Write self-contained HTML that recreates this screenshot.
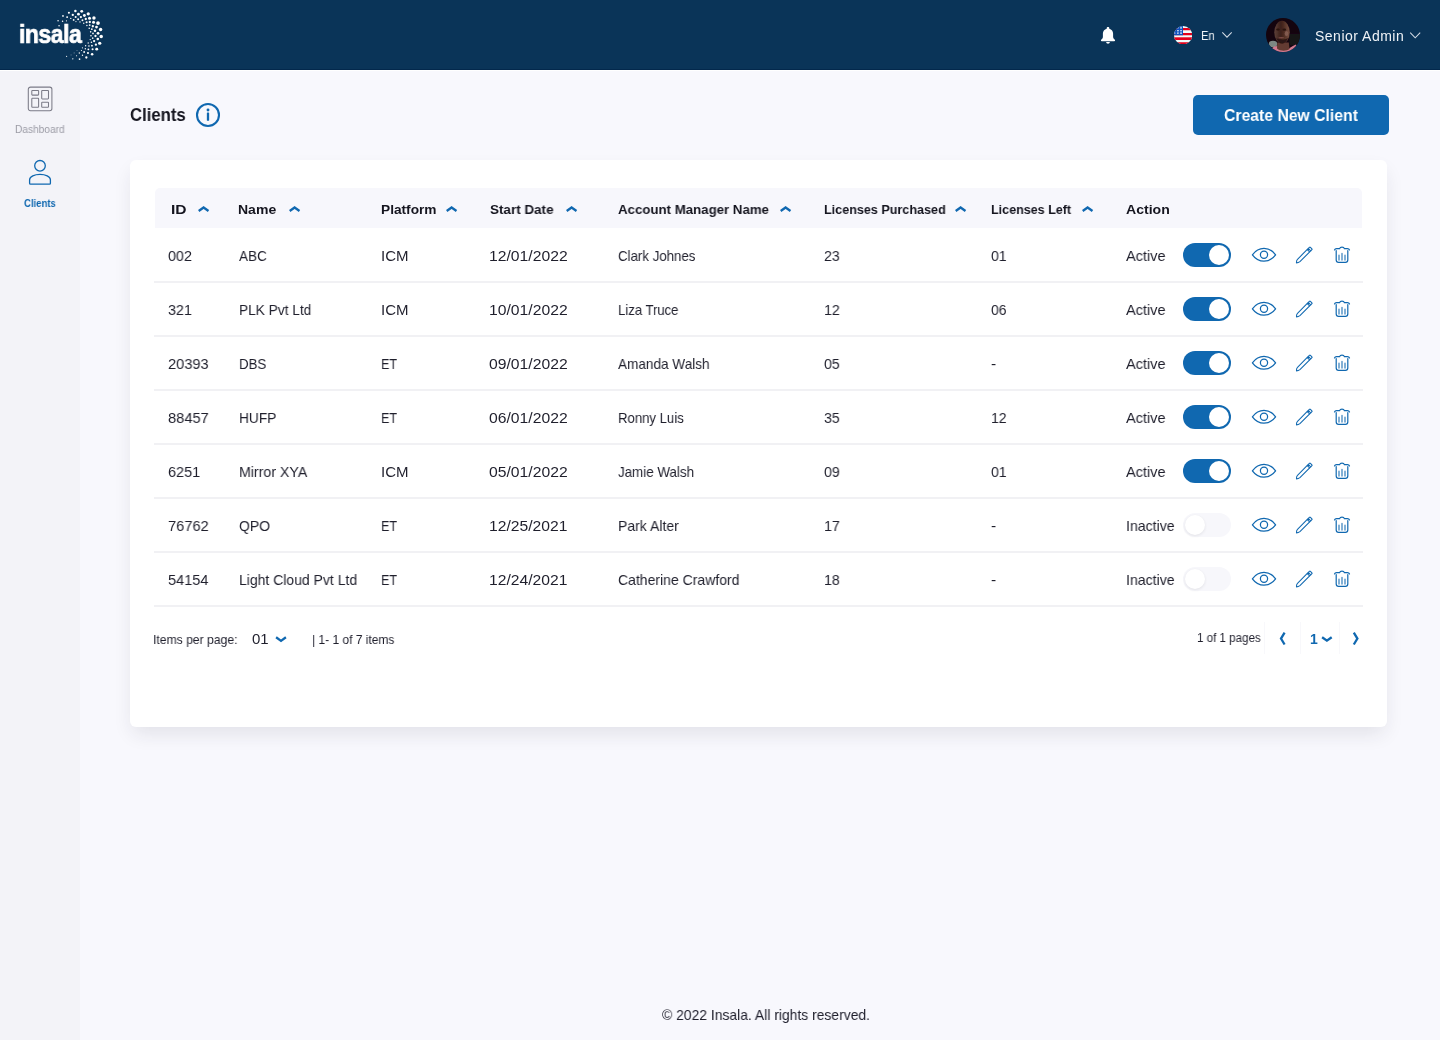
<!DOCTYPE html>
<html lang="en"><head><meta charset="utf-8"><title>Clients</title>
<style>
html,body{margin:0;padding:0;background:#f8f8fd}
header,aside,main,footer{display:block;position:static}
body{width:1440px;height:1040px;position:relative;overflow:hidden;background:#f8f8fd;font-family:"Liberation Sans",sans-serif}
.t{position:absolute;white-space:nowrap;transform-origin:0 50%;display:block;line-height:normal;will-change:transform}
#hdr{position:absolute;left:0;top:0;width:1440px;height:69px;background:#0a3458;border-bottom:1px solid #03284c;box-shadow:0 1px 0 #fff}
#side{position:absolute;left:0;top:70px;width:80px;height:970px;background:#f3f3f8}
#btn{position:absolute;left:1193px;top:95px;width:196px;height:40px;border-radius:5px;background:#1068b0}
#card{position:absolute;left:130px;top:160px;width:1257px;height:567px;border-radius:6px;background:#fff;box-shadow:0 9px 20px -3px rgba(40,40,55,.11)}
#thead{position:absolute;left:155px;top:188px;width:1207px;height:40px;border-radius:5px 5px 0 0;background:#f7f7fc}
.sep{position:absolute;left:154px;width:1209px;height:2px;background:#f1f1f4}
.tg{position:absolute;left:1183px;width:48px;height:24px;border-radius:12px}
.tg i{position:absolute;top:2px;width:20px;height:20px;border-radius:10px;background:#fff}
.tg.on{background:#1068b0}
.tg.on i{left:26px}
.tg.off{background:#f7f7fb}
.tg.off i{left:2px;box-shadow:0 1px 3px rgba(40,40,50,.10)}
.vd{position:absolute;top:622px;width:1px;height:32px;background:#f8f8fb}
</style></head>
<body>
<aside>
<div id="side"></div>
<svg style="position:absolute;left:27px;top:86px" width="26" height="26" viewBox="0 0 26 26" fill="none" stroke="#7b7b87" stroke-width="1.050"><rect x="1.300" y="1.100" width="23.600" height="23.600" rx="2.200"/><rect x="4.800" y="4.500" width="6.800" height="4.600" rx=".6"/><rect x="4.800" y="12.300" width="6.800" height="9" rx=".6"/><rect x="14.700" y="4.500" width="6.800" height="8.400" rx=".6"/><rect x="14.700" y="16.200" width="6.800" height="5.100" rx=".6"/></svg>
<svg style="position:absolute;left:27px;top:158px" width="26" height="28" viewBox="0 0 26 28" fill="none" stroke="#1068b0" stroke-width="1.300"><circle cx="13" cy="7.800" r="5.300"/><path d="M2.600 25.300v-3.500c0-3.300 5-5.400 10.400-5.400s10.400 2.100 10.400 5.400v3.500a.9.900 0 0 1-.9.900h-19a.9.900 0 0 1-.9-.9z"/></svg>
<span class="t" id="t4" style="left:15px;top:123px;font-size:10.5px;color:#9c9ca6;transform:scaleX(0.9665);">Dashboard</span>
<span class="t" id="t5" style="left:24px;top:197px;font-size:11px;color:#1068b0;font-weight:700;transform:scaleX(0.8665);">Clients</span>
</aside>
<header>
<div id="hdr"></div>
<svg style="position:absolute;left:0;top:0" width="120" height="70" viewBox="0 0 120 70" fill="#fff"><circle cx="75.38" cy="11.06" r="1.27"/><circle cx="81.73" cy="11.35" r="1.44"/><circle cx="88.25" cy="13.77" r="1.62"/><circle cx="93.96" cy="17.98" r="1.73"/><circle cx="98.00" cy="23.06" r="1.85"/><circle cx="100.60" cy="29.40" r="1.73"/><circle cx="101.23" cy="36.44" r="1.73"/><circle cx="99.73" cy="43.25" r="1.62"/><circle cx="96.73" cy="49.13" r="1.44"/><circle cx="92.12" cy="54.15" r="1.27"/><circle cx="86.35" cy="57.50" r="1.15"/><circle cx="79.54" cy="59.06" r="0.87"/><circle cx="72.79" cy="58.83" r="0.69"/><circle cx="66.62" cy="56.35" r="0.58"/><circle cx="68.92" cy="12.79" r="1.04"/><circle cx="62.98" cy="15.96" r="0.87"/><circle cx="58.08" cy="20.87" r="0.75"/><circle cx="59.06" cy="25.77" r="0.75"/><circle cx="72.79" cy="14.92" r="1.15"/><circle cx="78.44" cy="14.23" r="1.38"/><circle cx="84.38" cy="15.50" r="1.44"/><circle cx="89.52" cy="18.27" r="1.50"/><circle cx="93.56" cy="22.31" r="1.50"/><circle cx="96.50" cy="27.10" r="1.38"/><circle cx="98.06" cy="33.27" r="1.38"/><circle cx="97.77" cy="38.92" r="1.27"/><circle cx="95.87" cy="44.69" r="1.15"/><circle cx="92.58" cy="49.31" r="1.04"/><circle cx="87.96" cy="53.00" r="1.04"/><circle cx="82.48" cy="55.31" r="0.69"/><circle cx="76.54" cy="55.77" r="0.58"/><circle cx="71.06" cy="54.90" r="0.40"/><circle cx="67.13" cy="17.12" r="0.98"/><circle cx="62.58" cy="21.15" r="0.75"/><circle cx="70.77" cy="18.38" r="0.69"/><circle cx="75.67" cy="17.00" r="1.04"/><circle cx="80.87" cy="17.12" r="1.15"/><circle cx="85.77" cy="19.02" r="1.15"/><circle cx="89.81" cy="22.02" r="1.15"/><circle cx="92.81" cy="26.23" r="1.15"/><circle cx="95.00" cy="30.67" r="1.27"/><circle cx="95.46" cy="35.98" r="1.15"/><circle cx="94.13" cy="41.06" r="1.15"/><circle cx="91.94" cy="45.67" r="0.92"/><circle cx="88.37" cy="49.31" r="0.92"/><circle cx="84.15" cy="52.02" r="0.92"/><circle cx="79.31" cy="53.00" r="0.69"/><circle cx="74.12" cy="52.88" r="0.46"/><circle cx="66.44" cy="20.87" r="0.58"/><circle cx="73.65" cy="19.88" r="0.87"/><circle cx="78.15" cy="19.25" r="0.98"/><circle cx="82.48" cy="20.29" r="0.98"/><circle cx="86.63" cy="22.31" r="1.04"/><circle cx="89.69" cy="25.08" r="0.92"/><circle cx="91.83" cy="29.23" r="0.87"/><circle cx="92.98" cy="33.38" r="0.87"/><circle cx="92.69" cy="38.17" r="0.81"/><circle cx="91.42" cy="42.21" r="0.81"/><circle cx="88.94" cy="45.96" r="0.81"/><circle cx="85.31" cy="48.73" r="0.69"/><circle cx="81.44" cy="50.46" r="0.58"/><circle cx="77.00" cy="50.58" r="0.40"/><circle cx="75.96" cy="21.62" r="0.58"/><circle cx="80.00" cy="21.90" r="0.69"/><circle cx="83.75" cy="23.29" r="0.69"/><circle cx="86.92" cy="25.48" r="0.69"/><circle cx="89.23" cy="28.19" r="0.81"/><circle cx="90.67" cy="31.83" r="0.81"/><circle cx="90.96" cy="35.69" r="0.81"/><circle cx="90.21" cy="39.62" r="0.69"/><circle cx="88.19" cy="42.96" r="0.69"/><circle cx="85.65" cy="45.79" r="0.69"/><circle cx="82.42" cy="47.81" r="0.58"/></svg>
<svg style="position:absolute;left:1100px;top:26px" width="16" height="19" viewBox="0 0 16 19"><g transform="translate(0 .35) scale(1 .955)"><path fill="#fff" d="M8 0.6c-.8 0-1.3.6-1.3 1.3v.5C4.3 3 2.9 5 2.9 7.5v3.6c0 .9-.5 1.7-1.2 2.3-.5.4-.8.8-.8 1.300 0 .5.4.8.900.8h12.4c.5 0 .9-.3.9-.8 0-.5-.3-.9-.8-1.3-.7-.6-1.200-1.400-1.200-2.300V7.500C13.100 5 11.700 3 9.300 2.400v-.5C9.300 1.200 8.800.6 8 .6z"/><path fill="#fff" d="M6.200 16.300h3.600c0 1-.8 1.800-1.800 1.800s-1.800-.8-1.800-1.800z"/></g></svg>
<svg style="position:absolute;left:1174px;top:25.800px" width="18.300" height="18.300" viewBox="0 0 18.300 18.300"><defs><clipPath id="fc"><circle cx="9.150" cy="9.150" r="9.150"/></clipPath></defs><g clip-path="url(#fc)"><rect width="18.300" height="18.300" fill="#f1fafa"/><rect y="2" width="18.300" height="2.250" fill="#e3001b"/><rect y="7" width="18.300" height="2.250" fill="#e3001b"/><rect y="11.300" width="18.300" height="2.700" fill="#e3001b"/><rect y="16.250" width="18.300" height="2.100" fill="#e3001b"/><rect x="0" y="0" width="9" height="9.250" fill="#0d50bd"/><g fill="#dfe8f7"><rect x="3.100" y="1.400" width="1.700" height="1.100" opacity=".6"/><rect x="6.100" y="1.300" width="1.900" height="1.200"/><rect x="0.500" y="4.200" width="1" height="1" opacity=".5"/><rect x="3" y="4.200" width="1.900" height="1.100"/><rect x="6.100" y="4.200" width="1.900" height="1.100"/><rect x="0.300" y="6.400" width="1" height="1.600" opacity=".8"/><rect x="3.200" y="6.300" width="1.400" height="1.700" opacity=".9"/><rect x="6.100" y="6.300" width="1.900" height="1.700" opacity=".75"/></g></g></svg>
<svg style="position:absolute;left:1221px;top:30px" width="12" height="10" viewBox="0 0 12 10"><path d="M1.300 2.300L6 7.200L10.700 2.300" fill="none" stroke="#d3dbe5" stroke-width="1.050"/></svg>
<svg style="position:absolute;left:1266px;top:18px" width="34" height="34" viewBox="0 0 34 34"><defs><clipPath id="ac"><circle cx="17" cy="17" r="17"/></clipPath><filter id="ab" x="-20%" y="-20%" width="140%" height="140%"><feGaussianBlur stdDeviation="0.7"/></filter><linearGradient id="af" x1="0" x2="1" y1="0" y2="0"><stop offset="0" stop-color="#5e4039"/><stop offset=".42" stop-color="#3b1f19"/><stop offset=".58" stop-color="#4a2a20"/><stop offset="1" stop-color="#7a5142"/></linearGradient></defs><g clip-path="url(#ac)"><rect width="34" height="34" fill="#14040e"/><g filter="url(#ab)"><rect x="23.400" y="15.700" width="11" height="11.600" fill="#171314"/><ellipse cx="7" cy="26" rx="4.200" ry="3.300" fill="#7d8884"/><path d="M5.500 30.500C8 28.300 11 27.500 13.500 28.500L22.500 31C25 29 28 27 30 26.500L31 29L24 34H9z" fill="#d17a90"/><path d="M11.200 24.500h11.600l.7 6.500c-3 2.300-9.500 2.300-12.500-.5z" fill="#633a31"/><ellipse cx="16" cy="14.200" rx="7.700" ry="11.400" fill="url(#af)"/><path d="M10.300 20c1.500 3.500 3.500 5.400 5.900 5.400s4.600-2 5.800-5.400c-2 1.300-3.700 1.700-5.800 1.700s-4-.4-5.900-1.700z" fill="#2c1512"/><ellipse cx="12" cy="11.500" rx="1.800" ry="1.100" fill="#2a120e"/><ellipse cx="18.300" cy="11.700" rx="1.800" ry="1.100" fill="#2a120e"/><ellipse cx="15.300" cy="19.800" rx="3" ry=".8" fill="#7a4a44"/><ellipse cx="20.500" cy="15.500" rx="1.800" ry="2.500" fill="#8a6258" opacity=".8"/></g></g></svg>
<svg style="position:absolute;left:1409px;top:30px" width="12" height="10" viewBox="0 0 12 10"><path d="M1.200 2.700L6.200 7.800L11.200 2.700" fill="none" stroke="#d3dbe5" stroke-width="1.050"/></svg>
<span class="t" id="t1" style="left:19px;top:19px;font-size:26px;color:#fff;font-weight:700;letter-spacing:-0.5px;transform:scaleX(0.8812);-webkit-text-stroke:0.7px #fff;">insala</span>
<span class="t" id="t2" style="left:1201px;top:29px;font-size:12px;color:#f2f5f8;transform:scaleX(0.9347);">En</span>
<span class="t" id="t3" style="left:1315px;top:28px;font-size:14px;color:#eef2f6;letter-spacing:0.5px;">Senior Admin</span>
</header>
<main>
<svg style="position:absolute;left:195px;top:102px" width="26" height="26" viewBox="0 0 26 26"><circle cx="13" cy="13" r="11" fill="none" stroke="#1068b0" stroke-width="2.100"/><circle cx="13" cy="8" r="1.450" fill="#1068b0"/><rect x="11.850" y="10.500" width="2.300" height="8.300" rx=".5" fill="#1068b0"/></svg>
<div id="btn"></div>
<div id="card"></div>
<div id="thead"></div>
<svg style="position:absolute;left:196.6px;top:204px" width="14" height="11" viewBox="0 0 14 11"><path d="M1.700 7L6.600 3.500L11.500 7" fill="none" stroke="#1068b0" stroke-width="2.300"/></svg>
<svg style="position:absolute;left:287.6px;top:204px" width="14" height="11" viewBox="0 0 14 11"><path d="M1.700 7L6.600 3.500L11.500 7" fill="none" stroke="#1068b0" stroke-width="2.300"/></svg>
<svg style="position:absolute;left:444.6px;top:204px" width="14" height="11" viewBox="0 0 14 11"><path d="M1.700 7L6.600 3.500L11.500 7" fill="none" stroke="#1068b0" stroke-width="2.300"/></svg>
<svg style="position:absolute;left:565.0px;top:204px" width="14" height="11" viewBox="0 0 14 11"><path d="M1.700 7L6.600 3.500L11.500 7" fill="none" stroke="#1068b0" stroke-width="2.300"/></svg>
<svg style="position:absolute;left:778.6px;top:204px" width="14" height="11" viewBox="0 0 14 11"><path d="M1.700 7L6.600 3.500L11.500 7" fill="none" stroke="#1068b0" stroke-width="2.300"/></svg>
<svg style="position:absolute;left:954.0px;top:204px" width="14" height="11" viewBox="0 0 14 11"><path d="M1.700 7L6.600 3.500L11.500 7" fill="none" stroke="#1068b0" stroke-width="2.300"/></svg>
<svg style="position:absolute;left:1080.6px;top:204px" width="14" height="11" viewBox="0 0 14 11"><path d="M1.700 7L6.600 3.500L11.500 7" fill="none" stroke="#1068b0" stroke-width="2.300"/></svg>
<div class="tg on" style="top:243.0px"><i></i></div>
<svg style="position:absolute;left:1251px;top:246.0px" width="26" height="18" viewBox="0 0 26 18" fill="none" stroke="#1068b0" stroke-width="1.250"><path d="M1.400 8.800C4.400 4.700 8.400 2.400 13 2.400S21.600 4.700 24.600 8.800C21.600 12.900 17.600 15.200 13 15.200S4.400 12.900 1.400 8.800z" stroke-linejoin="round"/><circle cx="13" cy="8.800" r="3.600"/></svg>
<svg style="position:absolute;left:1293.600px;top:244.7px" width="20" height="20" viewBox="0 0 20 20" fill="none" stroke="#1068b0" stroke-width="1.150" stroke-linejoin="round"><g transform="translate(10 10) scale(.93) translate(-10 -10)"><path d="M1.900 18.500c-.1-1.300.3-2.900 1.100-3.900L14.600 3l2.600 2.600L5.600 17.200c-1 .8-2.400 1.300-3.700 1.300z"/><path d="M14.600 3l1.300-1.300a.7.700 0 0 1 1 0l1.600 1.600a.7.700 0 0 1 0 1L17.200 5.600"/><path d="M13.500 4.100l2.600 2.600"/></g></svg>
<svg style="position:absolute;left:1333px;top:245.4px" width="18" height="19" viewBox="0 0 18 19" fill="none" stroke="#1068b0" stroke-width="1.200" stroke-linecap="round"><path d="M1.500 5c.3-.9 1.100-1.400 2.100-1.400h3c.6-2 4.200-2 4.800 0h3c1 0 1.800.5 2.100 1.400"/><path d="M3.200 5.600v9.300a2.400 2.400 0 0 0 2.400 2.400h6.800a2.400 2.400 0 0 0 2.400-2.400V5.600"/><path d="M6 10.200v4.800M9 8.500v6.500M12 10.200v4.800" stroke-width="1.300" opacity=".8"/></svg>
<div class="sep" style="top:281.0px"></div>
<div class="tg on" style="top:297.0px"><i></i></div>
<svg style="position:absolute;left:1251px;top:300.0px" width="26" height="18" viewBox="0 0 26 18" fill="none" stroke="#1068b0" stroke-width="1.250"><path d="M1.400 8.800C4.400 4.700 8.400 2.400 13 2.400S21.600 4.700 24.600 8.800C21.600 12.900 17.600 15.200 13 15.200S4.400 12.900 1.400 8.800z" stroke-linejoin="round"/><circle cx="13" cy="8.800" r="3.600"/></svg>
<svg style="position:absolute;left:1293.600px;top:298.7px" width="20" height="20" viewBox="0 0 20 20" fill="none" stroke="#1068b0" stroke-width="1.150" stroke-linejoin="round"><g transform="translate(10 10) scale(.93) translate(-10 -10)"><path d="M1.900 18.500c-.1-1.300.3-2.900 1.100-3.900L14.600 3l2.600 2.600L5.600 17.200c-1 .8-2.400 1.300-3.700 1.300z"/><path d="M14.600 3l1.300-1.300a.7.700 0 0 1 1 0l1.600 1.600a.7.700 0 0 1 0 1L17.200 5.600"/><path d="M13.500 4.100l2.600 2.600"/></g></svg>
<svg style="position:absolute;left:1333px;top:299.4px" width="18" height="19" viewBox="0 0 18 19" fill="none" stroke="#1068b0" stroke-width="1.200" stroke-linecap="round"><path d="M1.500 5c.3-.9 1.100-1.400 2.100-1.400h3c.6-2 4.200-2 4.800 0h3c1 0 1.800.5 2.100 1.400"/><path d="M3.200 5.600v9.300a2.400 2.400 0 0 0 2.400 2.400h6.800a2.400 2.400 0 0 0 2.400-2.400V5.600"/><path d="M6 10.200v4.800M9 8.500v6.500M12 10.200v4.800" stroke-width="1.300" opacity=".8"/></svg>
<div class="sep" style="top:335.0px"></div>
<div class="tg on" style="top:351.0px"><i></i></div>
<svg style="position:absolute;left:1251px;top:354.0px" width="26" height="18" viewBox="0 0 26 18" fill="none" stroke="#1068b0" stroke-width="1.250"><path d="M1.400 8.800C4.400 4.700 8.400 2.400 13 2.400S21.600 4.700 24.600 8.800C21.600 12.900 17.600 15.200 13 15.200S4.400 12.900 1.400 8.800z" stroke-linejoin="round"/><circle cx="13" cy="8.800" r="3.600"/></svg>
<svg style="position:absolute;left:1293.600px;top:352.7px" width="20" height="20" viewBox="0 0 20 20" fill="none" stroke="#1068b0" stroke-width="1.150" stroke-linejoin="round"><g transform="translate(10 10) scale(.93) translate(-10 -10)"><path d="M1.900 18.500c-.1-1.300.3-2.900 1.100-3.900L14.600 3l2.600 2.600L5.600 17.200c-1 .8-2.400 1.300-3.700 1.300z"/><path d="M14.600 3l1.300-1.300a.7.700 0 0 1 1 0l1.600 1.600a.7.700 0 0 1 0 1L17.200 5.600"/><path d="M13.500 4.100l2.600 2.600"/></g></svg>
<svg style="position:absolute;left:1333px;top:353.4px" width="18" height="19" viewBox="0 0 18 19" fill="none" stroke="#1068b0" stroke-width="1.200" stroke-linecap="round"><path d="M1.500 5c.3-.9 1.100-1.400 2.100-1.400h3c.6-2 4.200-2 4.800 0h3c1 0 1.800.5 2.100 1.400"/><path d="M3.200 5.600v9.300a2.400 2.400 0 0 0 2.400 2.400h6.800a2.400 2.400 0 0 0 2.400-2.400V5.600"/><path d="M6 10.200v4.800M9 8.500v6.500M12 10.200v4.800" stroke-width="1.300" opacity=".8"/></svg>
<div class="sep" style="top:389.0px"></div>
<div class="tg on" style="top:405.0px"><i></i></div>
<svg style="position:absolute;left:1251px;top:408.0px" width="26" height="18" viewBox="0 0 26 18" fill="none" stroke="#1068b0" stroke-width="1.250"><path d="M1.400 8.800C4.400 4.700 8.400 2.400 13 2.400S21.600 4.700 24.600 8.800C21.600 12.900 17.600 15.200 13 15.200S4.400 12.900 1.400 8.800z" stroke-linejoin="round"/><circle cx="13" cy="8.800" r="3.600"/></svg>
<svg style="position:absolute;left:1293.600px;top:406.7px" width="20" height="20" viewBox="0 0 20 20" fill="none" stroke="#1068b0" stroke-width="1.150" stroke-linejoin="round"><g transform="translate(10 10) scale(.93) translate(-10 -10)"><path d="M1.900 18.500c-.1-1.300.3-2.900 1.100-3.900L14.600 3l2.600 2.600L5.600 17.200c-1 .8-2.400 1.300-3.700 1.300z"/><path d="M14.600 3l1.300-1.300a.7.700 0 0 1 1 0l1.600 1.600a.7.700 0 0 1 0 1L17.200 5.600"/><path d="M13.500 4.100l2.600 2.600"/></g></svg>
<svg style="position:absolute;left:1333px;top:407.4px" width="18" height="19" viewBox="0 0 18 19" fill="none" stroke="#1068b0" stroke-width="1.200" stroke-linecap="round"><path d="M1.500 5c.3-.9 1.100-1.400 2.100-1.400h3c.6-2 4.200-2 4.800 0h3c1 0 1.800.5 2.100 1.400"/><path d="M3.200 5.600v9.300a2.400 2.400 0 0 0 2.400 2.400h6.800a2.400 2.400 0 0 0 2.400-2.400V5.600"/><path d="M6 10.200v4.800M9 8.500v6.500M12 10.200v4.800" stroke-width="1.300" opacity=".8"/></svg>
<div class="sep" style="top:443.0px"></div>
<div class="tg on" style="top:459.0px"><i></i></div>
<svg style="position:absolute;left:1251px;top:462.0px" width="26" height="18" viewBox="0 0 26 18" fill="none" stroke="#1068b0" stroke-width="1.250"><path d="M1.400 8.800C4.400 4.700 8.400 2.400 13 2.400S21.600 4.700 24.600 8.800C21.600 12.900 17.600 15.200 13 15.200S4.400 12.900 1.400 8.800z" stroke-linejoin="round"/><circle cx="13" cy="8.800" r="3.600"/></svg>
<svg style="position:absolute;left:1293.600px;top:460.7px" width="20" height="20" viewBox="0 0 20 20" fill="none" stroke="#1068b0" stroke-width="1.150" stroke-linejoin="round"><g transform="translate(10 10) scale(.93) translate(-10 -10)"><path d="M1.900 18.500c-.1-1.300.3-2.900 1.100-3.900L14.600 3l2.600 2.600L5.600 17.200c-1 .8-2.400 1.300-3.700 1.300z"/><path d="M14.600 3l1.300-1.300a.7.700 0 0 1 1 0l1.600 1.600a.7.700 0 0 1 0 1L17.200 5.600"/><path d="M13.500 4.100l2.600 2.600"/></g></svg>
<svg style="position:absolute;left:1333px;top:461.4px" width="18" height="19" viewBox="0 0 18 19" fill="none" stroke="#1068b0" stroke-width="1.200" stroke-linecap="round"><path d="M1.500 5c.3-.9 1.100-1.400 2.100-1.400h3c.6-2 4.200-2 4.800 0h3c1 0 1.800.5 2.100 1.400"/><path d="M3.200 5.600v9.300a2.400 2.400 0 0 0 2.400 2.400h6.800a2.400 2.400 0 0 0 2.400-2.400V5.600"/><path d="M6 10.200v4.800M9 8.500v6.500M12 10.200v4.800" stroke-width="1.300" opacity=".8"/></svg>
<div class="sep" style="top:497.0px"></div>
<div class="tg off" style="top:513.0px"><i></i></div>
<svg style="position:absolute;left:1251px;top:516.0px" width="26" height="18" viewBox="0 0 26 18" fill="none" stroke="#1068b0" stroke-width="1.250"><path d="M1.400 8.800C4.400 4.700 8.400 2.400 13 2.400S21.600 4.700 24.600 8.800C21.600 12.900 17.600 15.200 13 15.200S4.400 12.900 1.400 8.800z" stroke-linejoin="round"/><circle cx="13" cy="8.800" r="3.600"/></svg>
<svg style="position:absolute;left:1293.600px;top:514.7px" width="20" height="20" viewBox="0 0 20 20" fill="none" stroke="#1068b0" stroke-width="1.150" stroke-linejoin="round"><g transform="translate(10 10) scale(.93) translate(-10 -10)"><path d="M1.900 18.500c-.1-1.300.3-2.900 1.100-3.900L14.600 3l2.600 2.600L5.600 17.200c-1 .8-2.400 1.300-3.700 1.300z"/><path d="M14.600 3l1.300-1.300a.7.700 0 0 1 1 0l1.600 1.600a.7.700 0 0 1 0 1L17.200 5.600"/><path d="M13.500 4.100l2.600 2.600"/></g></svg>
<svg style="position:absolute;left:1333px;top:515.4px" width="18" height="19" viewBox="0 0 18 19" fill="none" stroke="#1068b0" stroke-width="1.200" stroke-linecap="round"><path d="M1.500 5c.3-.9 1.100-1.400 2.100-1.400h3c.6-2 4.200-2 4.800 0h3c1 0 1.800.5 2.100 1.400"/><path d="M3.200 5.600v9.300a2.400 2.400 0 0 0 2.400 2.400h6.800a2.400 2.400 0 0 0 2.400-2.400V5.600"/><path d="M6 10.200v4.800M9 8.500v6.500M12 10.200v4.800" stroke-width="1.300" opacity=".8"/></svg>
<div class="sep" style="top:551.0px"></div>
<div class="tg off" style="top:567.0px"><i></i></div>
<svg style="position:absolute;left:1251px;top:570.0px" width="26" height="18" viewBox="0 0 26 18" fill="none" stroke="#1068b0" stroke-width="1.250"><path d="M1.400 8.800C4.400 4.700 8.400 2.400 13 2.400S21.600 4.700 24.600 8.800C21.600 12.900 17.600 15.200 13 15.200S4.400 12.900 1.400 8.800z" stroke-linejoin="round"/><circle cx="13" cy="8.800" r="3.600"/></svg>
<svg style="position:absolute;left:1293.600px;top:568.7px" width="20" height="20" viewBox="0 0 20 20" fill="none" stroke="#1068b0" stroke-width="1.150" stroke-linejoin="round"><g transform="translate(10 10) scale(.93) translate(-10 -10)"><path d="M1.900 18.500c-.1-1.300.3-2.900 1.100-3.900L14.600 3l2.600 2.600L5.600 17.200c-1 .8-2.400 1.300-3.700 1.300z"/><path d="M14.600 3l1.300-1.300a.7.700 0 0 1 1 0l1.600 1.600a.7.700 0 0 1 0 1L17.200 5.600"/><path d="M13.500 4.100l2.600 2.600"/></g></svg>
<svg style="position:absolute;left:1333px;top:569.4px" width="18" height="19" viewBox="0 0 18 19" fill="none" stroke="#1068b0" stroke-width="1.200" stroke-linecap="round"><path d="M1.500 5c.3-.9 1.100-1.400 2.100-1.400h3c.6-2 4.200-2 4.800 0h3c1 0 1.800.5 2.100 1.400"/><path d="M3.200 5.600v9.300a2.400 2.400 0 0 0 2.400 2.400h6.800a2.400 2.400 0 0 0 2.400-2.400V5.600"/><path d="M6 10.200v4.800M9 8.500v6.500M12 10.200v4.800" stroke-width="1.300" opacity=".8"/></svg>
<div class="sep" style="top:605.0px"></div>
<svg style="position:absolute;left:274px;top:634px" width="14" height="10" viewBox="0 0 14 10"><path d="M2.100 3.300L7 6.900L11.900 3.300" fill="none" stroke="#1068b0" stroke-width="2.300"/></svg>
<svg style="position:absolute;left:1277px;top:631px" width="11" height="15" viewBox="0 0 11 15"><path d="M7.600 1.700L4 7.600L7.600 13.500" fill="none" stroke="#1068b0" stroke-width="2.300"/></svg>
<svg style="position:absolute;left:1320px;top:633.500px" width="14" height="10" viewBox="0 0 14 10"><path d="M2.100 3.200L6.900 6.700L11.700 3.200" fill="none" stroke="#1068b0" stroke-width="2.300"/></svg>
<svg style="position:absolute;left:1350px;top:631px" width="11" height="15" viewBox="0 0 11 15"><path d="M3.800 1.700L7.400 7.600L3.800 13.500" fill="none" stroke="#1068b0" stroke-width="2.300"/></svg>
<div class="vd" style="left:1264.0px"></div>
<div class="vd" style="left:1299.5px"></div>
<div class="vd" style="left:1338.5px"></div>
<span class="t" id="t6" style="left:130px;top:105px;font-size:18px;color:#15151f;font-weight:700;transform:scaleX(0.9278);">Clients</span>
<span class="t" id="t7" style="left:1224px;top:106px;font-size:17px;color:#fff;font-weight:700;transform:scaleX(0.9263);">Create New Client</span>
<span class="t" id="t8" style="left:171px;top:202px;font-size:13.6px;color:#15151f;font-weight:700;transform:scaleX(1.1442);">ID</span>
<span class="t" id="t9" style="left:238px;top:202px;font-size:13.6px;color:#15151f;font-weight:700;transform:scaleX(1.0310);">Name</span>
<span class="t" id="t10" style="left:381px;top:202px;font-size:13.6px;color:#15151f;font-weight:700;transform:scaleX(1.0074);">Platform</span>
<span class="t" id="t11" style="left:490px;top:202px;font-size:13.6px;color:#15151f;font-weight:700;transform:scaleX(0.9897);">Start Date</span>
<span class="t" id="t12" style="left:618px;top:202px;font-size:13.6px;color:#15151f;font-weight:700;transform:scaleX(0.9748);">Account Manager Name</span>
<span class="t" id="t13" style="left:824px;top:202px;font-size:13.6px;color:#15151f;font-weight:700;transform:scaleX(0.9258);">Licenses Purchased</span>
<span class="t" id="t14" style="left:991px;top:202px;font-size:13.6px;color:#15151f;font-weight:700;transform:scaleX(0.9225);">Licenses Left</span>
<span class="t" id="t15" style="left:1126px;top:202px;font-size:13.6px;color:#15151f;font-weight:700;transform:scaleX(1.0349);">Action</span>
<span class="t" id="t16" style="left:168px;top:247px;font-size:15px;color:#1f1f2c;transform:scaleX(0.9556);">002</span>
<span class="t" id="t17" style="left:239px;top:247px;font-size:15px;color:#1f1f2c;transform:scaleX(0.9051);">ABC</span>
<span class="t" id="t18" style="left:381px;top:247px;font-size:15px;color:#1f1f2c;transform:scaleX(0.9974);">ICM</span>
<span class="t" id="t19" style="left:489px;top:247px;font-size:15px;color:#1f1f2c;transform:scaleX(1.0481);">12/01/2022</span>
<span class="t" id="t20" style="left:618px;top:247px;font-size:15px;color:#1f1f2c;transform:scaleX(0.8839);">Clark Johnes</span>
<span class="t" id="t21" style="left:824px;top:247px;font-size:15px;color:#1f1f2c;transform:scaleX(0.9483);">23</span>
<span class="t" id="t22" style="left:991px;top:247px;font-size:15px;color:#1f1f2c;transform:scaleX(0.9401);">01</span>
<span class="t" id="t23" style="left:1126px;top:247px;font-size:15px;color:#1f1f2c;transform:scaleX(0.9678);">Active</span>
<span class="t" id="t24" style="left:168px;top:301px;font-size:15px;color:#1f1f2c;transform:scaleX(0.9548);">321</span>
<span class="t" id="t25" style="left:239px;top:301px;font-size:15px;color:#1f1f2c;transform:scaleX(0.9137);">PLK Pvt Ltd</span>
<span class="t" id="t26" style="left:381px;top:301px;font-size:15px;color:#1f1f2c;transform:scaleX(0.9974);">ICM</span>
<span class="t" id="t27" style="left:489px;top:301px;font-size:15px;color:#1f1f2c;transform:scaleX(1.0481);">10/01/2022</span>
<span class="t" id="t28" style="left:618px;top:301px;font-size:15px;color:#1f1f2c;transform:scaleX(0.8740);">Liza Truce</span>
<span class="t" id="t29" style="left:824px;top:301px;font-size:15px;color:#1f1f2c;transform:scaleX(0.9540);">12</span>
<span class="t" id="t30" style="left:991px;top:301px;font-size:15px;color:#1f1f2c;transform:scaleX(0.9358);">06</span>
<span class="t" id="t31" style="left:1126px;top:301px;font-size:15px;color:#1f1f2c;transform:scaleX(0.9678);">Active</span>
<span class="t" id="t32" style="left:168px;top:355px;font-size:15px;color:#1f1f2c;transform:scaleX(0.9766);">20393</span>
<span class="t" id="t33" style="left:239px;top:355px;font-size:15px;color:#1f1f2c;transform:scaleX(0.8854);">DBS</span>
<span class="t" id="t34" style="left:381px;top:355px;font-size:15px;color:#1f1f2c;transform:scaleX(0.8339);">ET</span>
<span class="t" id="t35" style="left:489px;top:355px;font-size:15px;color:#1f1f2c;transform:scaleX(1.0481);">09/01/2022</span>
<span class="t" id="t36" style="left:618px;top:355px;font-size:15px;color:#1f1f2c;transform:scaleX(0.9054);">Amanda Walsh</span>
<span class="t" id="t37" style="left:824px;top:355px;font-size:15px;color:#1f1f2c;transform:scaleX(0.9466);">05</span>
<span class="t" id="t38" style="left:991px;top:355px;font-size:15px;color:#1f1f2c;transform:scaleX(1.0384);">-</span>
<span class="t" id="t39" style="left:1126px;top:355px;font-size:15px;color:#1f1f2c;transform:scaleX(0.9678);">Active</span>
<span class="t" id="t40" style="left:168px;top:409px;font-size:15px;color:#1f1f2c;transform:scaleX(0.9789);">88457</span>
<span class="t" id="t41" style="left:239px;top:409px;font-size:15px;color:#1f1f2c;transform:scaleX(0.9163);">HUFP</span>
<span class="t" id="t42" style="left:381px;top:409px;font-size:15px;color:#1f1f2c;transform:scaleX(0.8339);">ET</span>
<span class="t" id="t43" style="left:489px;top:409px;font-size:15px;color:#1f1f2c;transform:scaleX(1.0481);">06/01/2022</span>
<span class="t" id="t44" style="left:618px;top:409px;font-size:15px;color:#1f1f2c;transform:scaleX(0.8765);">Ronny Luis</span>
<span class="t" id="t45" style="left:824px;top:409px;font-size:15px;color:#1f1f2c;transform:scaleX(0.9466);">35</span>
<span class="t" id="t46" style="left:991px;top:409px;font-size:15px;color:#1f1f2c;transform:scaleX(0.9414);">12</span>
<span class="t" id="t47" style="left:1126px;top:409px;font-size:15px;color:#1f1f2c;transform:scaleX(0.9678);">Active</span>
<span class="t" id="t48" style="left:168px;top:463px;font-size:15px;color:#1f1f2c;transform:scaleX(0.9650);">6251</span>
<span class="t" id="t49" style="left:239px;top:463px;font-size:15px;color:#1f1f2c;transform:scaleX(0.9459);">Mirror XYA</span>
<span class="t" id="t50" style="left:381px;top:463px;font-size:15px;color:#1f1f2c;transform:scaleX(0.9974);">ICM</span>
<span class="t" id="t51" style="left:489px;top:463px;font-size:15px;color:#1f1f2c;transform:scaleX(1.0481);">05/01/2022</span>
<span class="t" id="t52" style="left:618px;top:463px;font-size:15px;color:#1f1f2c;transform:scaleX(0.8905);">Jamie Walsh</span>
<span class="t" id="t53" style="left:824px;top:463px;font-size:15px;color:#1f1f2c;transform:scaleX(0.9514);">09</span>
<span class="t" id="t54" style="left:991px;top:463px;font-size:15px;color:#1f1f2c;transform:scaleX(0.9401);">01</span>
<span class="t" id="t55" style="left:1126px;top:463px;font-size:15px;color:#1f1f2c;transform:scaleX(0.9678);">Active</span>
<span class="t" id="t56" style="left:168px;top:517px;font-size:15px;color:#1f1f2c;transform:scaleX(0.9789);">76762</span>
<span class="t" id="t57" style="left:239px;top:517px;font-size:15px;color:#1f1f2c;transform:scaleX(0.9287);">QPO</span>
<span class="t" id="t58" style="left:381px;top:517px;font-size:15px;color:#1f1f2c;transform:scaleX(0.8339);">ET</span>
<span class="t" id="t59" style="left:489px;top:517px;font-size:15px;color:#1f1f2c;transform:scaleX(1.0451);">12/25/2021</span>
<span class="t" id="t60" style="left:618px;top:517px;font-size:15px;color:#1f1f2c;transform:scaleX(0.9354);">Park Alter</span>
<span class="t" id="t61" style="left:824px;top:517px;font-size:15px;color:#1f1f2c;transform:scaleX(0.9540);">17</span>
<span class="t" id="t62" style="left:991px;top:517px;font-size:15px;color:#1f1f2c;transform:scaleX(1.0384);">-</span>
<span class="t" id="t63" style="left:1126px;top:517px;font-size:15px;color:#1f1f2c;transform:scaleX(0.9425);">Inactive</span>
<span class="t" id="t64" style="left:168px;top:571px;font-size:15px;color:#1f1f2c;transform:scaleX(0.9714);">54154</span>
<span class="t" id="t65" style="left:239px;top:571px;font-size:15px;color:#1f1f2c;transform:scaleX(0.9318);">Light Cloud Pvt Ltd</span>
<span class="t" id="t66" style="left:381px;top:571px;font-size:15px;color:#1f1f2c;transform:scaleX(0.8339);">ET</span>
<span class="t" id="t67" style="left:489px;top:571px;font-size:15px;color:#1f1f2c;transform:scaleX(1.0451);">12/24/2021</span>
<span class="t" id="t68" style="left:618px;top:571px;font-size:15px;color:#1f1f2c;transform:scaleX(0.9334);">Catherine Crawford</span>
<span class="t" id="t69" style="left:824px;top:571px;font-size:15px;color:#1f1f2c;transform:scaleX(0.9479);">18</span>
<span class="t" id="t70" style="left:991px;top:571px;font-size:15px;color:#1f1f2c;transform:scaleX(1.0384);">-</span>
<span class="t" id="t71" style="left:1126px;top:571px;font-size:15px;color:#1f1f2c;transform:scaleX(0.9425);">Inactive</span>
<span class="t" id="t72" style="left:153px;top:632px;font-size:13px;color:#1f1f2c;transform:scaleX(0.9356);">Items per page:</span>
<span class="t" id="t73" style="left:252px;top:630px;font-size:15px;color:#1f1f2c;transform:scaleX(0.9715);">01</span>
<span class="t" id="t74" style="left:312px;top:632px;font-size:13px;color:#1f1f2c;transform:scaleX(0.9225);">| 1- 1 of 7 items</span>
<span class="t" id="t75" style="left:1197px;top:631px;font-size:12px;color:#1f1f2c;transform:scaleX(0.9645);">1 of 1 pages</span>
<span class="t" id="t76" style="left:1310px;top:631px;font-size:14px;color:#1068b0;font-weight:700;transform:scaleX(0.9585);">1</span>
</main>
<footer>
<span class="t" id="t77" style="left:662px;top:1006px;font-size:15px;color:#1f1f2c;transform:scaleX(0.9263);">© 2022 Insala. All rights reserved.</span>
</footer>
</body></html>
